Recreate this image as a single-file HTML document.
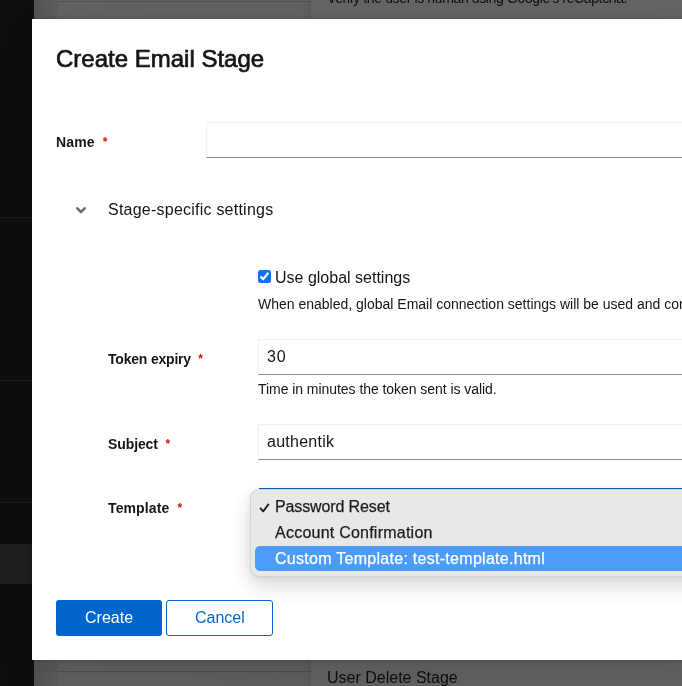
<!DOCTYPE html>
<html>
<head>
<meta charset="utf-8">
<title>Create Email Stage</title>
<style>
*{box-sizing:border-box;margin:0;padding:0}
html,body{width:682px;height:686px;overflow:hidden;background:#606060;font-family:"Liberation Sans",sans-serif;color:#151515}
.abs{position:absolute}
.t{position:absolute;white-space:nowrap;line-height:1;will-change:transform}
/* background page (dimmed) */
#side{left:0;top:0;width:34px;height:686px;background:#0e0f11}
.sdiv{left:0;width:34px;height:1px;background:#191b1d}
#sact{left:0;top:544px;width:34px;height:40px;background:#1f2022}
#gut{left:34px;top:0;width:24px;height:686px;background:linear-gradient(90deg,#535353 0,#5d5d5d 100%)}
#colL{left:58px;top:0;width:253px;height:686px;background:linear-gradient(90deg,#626262 0,#616161 244px,#5a5a5a 253px)}
#colR{left:311px;top:0;width:371px;height:686px;background:#646464}
.hl{height:1px;background:#505050}
/* modal */
#modal{left:32px;top:19px;width:660px;height:641px;background:#fff;box-shadow:0 16px 32px 0 rgba(3,3,3,.13),0 0 8px 0 rgba(3,3,3,.1),0 0 1px rgba(0,0,0,.5)}
.inp{position:absolute;height:36px;background:#fff;border:1px solid #f0f0f0;border-bottom:1px solid #8a8d90}
.req{color:#c9190b}
.lbl{font-weight:bold;font-size:14px}
.req{font-size:12px;position:relative;top:-1px;letter-spacing:0}
/* dropdown */
#dd{left:250px;top:489px;width:460px;height:88px;border-radius:9px;background:#e8e8e8;border:1px solid #d2d2d2;box-shadow:0 9px 22px rgba(0,0,0,.15),0 2px 6px rgba(0,0,0,.06)}
#ddsel{left:255px;top:546px;width:440px;height:25px;border-radius:5px 0 0 5px;background:#4b9cf8}
.btn{position:absolute;top:600px;height:36px;border-radius:3px}
</style>
</head>
<body>
<div class="abs" id="side"></div>
<div class="abs sdiv" style="top:217px"></div>
<div class="abs sdiv" style="top:380px"></div>
<div class="abs sdiv" style="top:502px"></div>
<div class="abs" id="sact"></div>
<div class="abs" id="gut"></div>
<div class="abs" id="colL"></div>
<div class="abs" id="colR"></div>
<div class="abs hl" style="left:58px;top:1px;width:253px"></div>
<div class="abs hl" style="left:58px;top:671px;width:253px"></div>
<div class="t" id="bg1" style="left:327px;top:-9px;font-size:14px;letter-spacing:-.37px;color:#0d0d0d">Verify the user is human using Google's reCaptcha.</div>
<div class="t" id="bg2" style="left:327px;top:670px;font-size:16px;color:#0d0d0d">User Delete Stage</div>

<div class="abs" id="modal"></div>

<div class="t" id="title" style="left:56px;top:47px;font-size:24px;-webkit-text-stroke:.7px #151515">Create Email Stage</div>

<div class="t lbl" id="l1" style="letter-spacing:.12px;left:56px;top:135px">Name&nbsp; <span class="req">*</span></div>
<div class="inp" style="left:206px;top:122px;width:490px"></div>

<svg class="abs" style="left:76px;top:207px" width="10" height="7" viewBox="0 0 10 7"><path d="M1.3 1.3 L5 5 L8.7 1.3" fill="none" stroke="#6a6e73" stroke-width="2.5" stroke-linecap="round" stroke-linejoin="round"/></svg>
<div class="t" id="sec" style="left:108px;top:202px;font-size:16px;letter-spacing:.23px">Stage-specific settings</div>

<div class="abs" style="left:258px;top:270px;width:13px;height:13px;border-radius:2.5px;background:#0b73fe"></div>
<svg class="abs" style="left:258px;top:270px" width="13" height="13" viewBox="0 0 13 13"><path d="M2.5 6.5 L5.15 9.1 L10.4 2.7" fill="none" stroke="#fff" stroke-width="2.2" stroke-linecap="butt" stroke-linejoin="miter"/></svg>
<div class="t" id="ugs" style="left:275px;top:270px;font-size:16px">Use global settings</div>
<div class="t" id="h1" style="left:258px;top:297px;font-size:14px">When enabled, global Email connection settings will be used and connection settings below will be ignored.</div>

<div class="t lbl" id="l2" style="letter-spacing:-.2px;left:108px;top:352px">Token expiry&nbsp; <span class="req">*</span></div>
<div class="inp" style="left:258px;top:339px;width:440px"></div>
<div class="t" id="v30" style="left:267px;top:349px;font-size:16px;letter-spacing:.8px">30</div>
<div class="t" id="h2" style="letter-spacing:-.05px;left:258px;top:382px;font-size:14px">Time in minutes the token sent is valid.</div>

<div class="t lbl" id="l3" style="letter-spacing:-.1px;left:108px;top:437px">Subject&nbsp; <span class="req">*</span></div>
<div class="inp" style="left:258px;top:424px;width:440px"></div>
<div class="t" id="vau" style="left:267px;top:434px;font-size:16px;letter-spacing:.25px">authentik</div>

<div class="t lbl" id="l4" style="letter-spacing:.12px;left:108px;top:501px">Template&nbsp; <span class="req">*</span></div>
<div class="abs" style="left:259px;top:488px;width:440px;height:1px;background:#0a5fc4"></div>

<div class="abs" id="dd"></div>
<div class="abs" id="ddsel"></div>
<svg class="abs" style="left:259px;top:503px" width="11" height="10" viewBox="0 0 11 10"><path d="M1.6 5.4 L4.2 8.4 L9.4 1.4" fill="none" stroke="#1a1a1a" stroke-width="1.8" stroke-linecap="round" stroke-linejoin="round"/></svg>
<div class="t" id="o1" style="left:275px;top:499px;font-size:16px;letter-spacing:-.12px;color:#1c1c1c;-webkit-text-stroke:.25px #1c1c1c">Password Reset</div>
<div class="t" id="o2" style="left:275px;top:525px;font-size:16px;letter-spacing:.235px;color:#1c1c1c;-webkit-text-stroke:.25px #1c1c1c">Account Confirmation</div>
<div class="t" id="o3" style="left:275px;top:551px;font-size:16px;letter-spacing:.28px;color:#fff;-webkit-text-stroke:.25px #fff">Custom Template: test-template.html</div>

<div class="btn" style="left:56px;width:106px;background:#0066cc"></div>
<div class="t" id="b1" style="left:85px;top:610px;font-size:16px;color:#fff">Create</div>
<div class="btn" style="left:166px;width:107px;background:#fff;border:1px solid #0066cc"></div>
<div class="t" id="b2" style="left:195px;top:610px;font-size:16px;color:#0066cc">Cancel</div>
</body>
</html>
